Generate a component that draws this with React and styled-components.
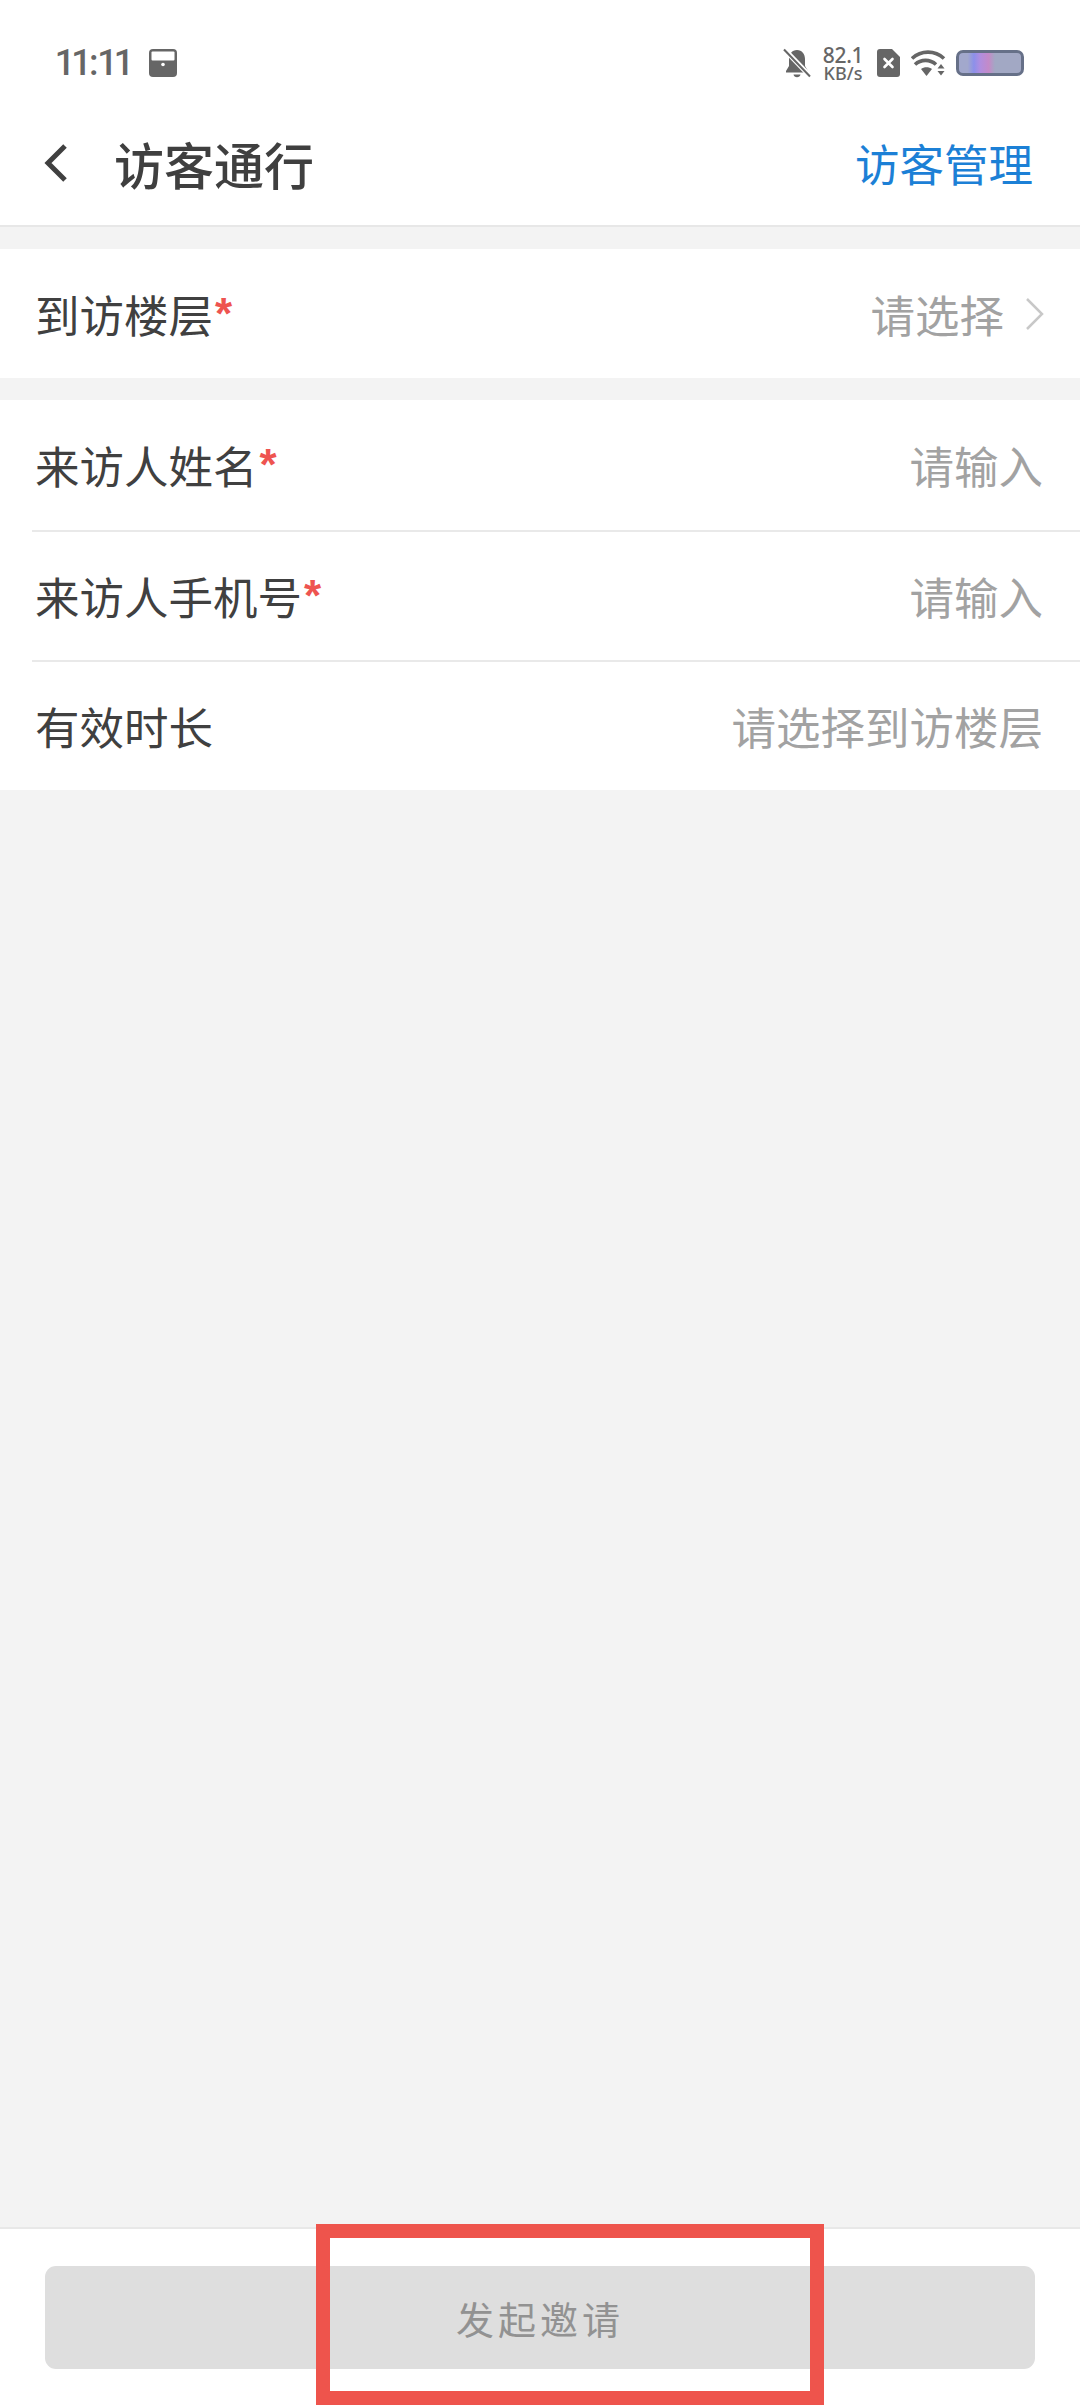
import React from "react";
import styled, { createGlobalStyle } from "styled-components";

const Global = createGlobalStyle`
  html, body { margin: 0; padding: 0; background: #f3f3f3; }
  * { box-sizing: border-box; }
  body { font-family: "Noto Sans CJK SC", "Noto Sans", sans-serif; }
`;

const Page = styled.div`
  position: relative;
  width: 1080px;
  height: 2408px;
  display: flex;
  flex-direction: column;
  background: #f3f3f3;
  overflow: hidden;
`;

const Top = styled.header`
  height: 227px;
  background: #fff;
  border-bottom: 2px solid #e7e7e7;
  flex: none;
`;

const StatusBar = styled.div`
  height: 105px;
  padding: 21px 56px 0 56px;
  display: flex;
  align-items: center;
  justify-content: space-between;
  color: #666;
`;

const StatusGroup = styled.div`
  display: flex;
  align-items: center;
`;

const Clock = styled.span`
  font: 500 36px/1 Roboto, sans-serif;
  font-variant-numeric: proportional-nums;
  letter-spacing: 0;
  margin-right: 17px;
`;

const Speed = styled.div`
  width: 42px;
  margin: 0 13px 0 11px;
  display: flex;
  flex-direction: column;
  align-items: center;
  gap: 2px;
  font-family: "Noto Sans", sans-serif;
  font-weight: 500;
  color: #666;
`;

const SpeedValue = styled.span`
  font-size: 21px;
  line-height: 18px;
  letter-spacing: -0.3px;
`;

const SpeedUnit = styled.span`
  font-size: 18px;
  line-height: 15px;
`;

const SimGap = styled.span`
  width: 11px;
`;

const Battery = styled.div`
  width: 68px;
  height: 26px;
  margin-left: 10px;
  border: 3px solid #667088;
  border-radius: 7px;
  background: linear-gradient(90deg, #a2a8cc 0 14%, #8c90ea 24%, #b08ee0 34%, #c48ac8 48%, #a2a8c4 58%, #a2a8c4 100%);
`;

const NavBar = styled.div`
  height: 116px;
  padding: 0 47px 0 44px;
  display: flex;
  align-items: center;
`;

const Back = styled.svg`
  width: 24px;
  height: 44px;
  margin-right: 46px;
  flex: none;
`;

const Title = styled.h1`
  margin: 0;
  flex: 1;
  font-size: 50px;
  line-height: 60px;
  font-weight: 500;
  color: #3f3f3f;
`;

const NavAction = styled.span`
  font-size: 44.5px;
  line-height: 60px;
  color: #1c80d6;
`;

const Group = styled.section`
  background: #fff;
  margin-top: 22px;
`;

const Row = styled.div`
  height: ${(p) => p.$h || 130}px;
  margin-left: 32px;
  padding: 0 37px 0 3px;
  display: flex;
  align-items: center;
  justify-content: space-between;
  & + & { border-top: 2px solid #e9e9e9; }
`;

const Label = styled.span`
  font-size: 44.5px;
  line-height: 60px;
  color: #404040;
`;

const Star = styled.span`
  font: 700 44px/44px "Liberation Sans", sans-serif;
  color: #ee5450;
  margin-left: 2px;
  display: inline-block;
  transform: translateY(-4px);
`;

const Value = styled.span`
  display: flex;
  align-items: center;
  font-size: 44.5px;
  line-height: 60px;
  color: #a2a2a2;
`;

const Chevron = styled.svg`
  width: 20px;
  height: 34px;
  margin-left: 21px;
  margin-right: -2px;
`;

const Spacer = styled.div`
  flex: 1;
`;

const Footer = styled.footer`
  height: 181px;
  flex: none;
  background: #fff;
  border-top: 2px solid #e8e8e8;
  padding: 37px 45px 0;
`;

const Submit = styled.div`
  height: 103px;
  border-radius: 11px;
  background: #dedede;
  display: flex;
  align-items: center;
  justify-content: center;
  font-size: 38px;
  letter-spacing: 4px;
  color: #929292;
`;

const Highlight = styled.div`
  position: absolute;
  left: 316px;
  top: 2224px;
  width: 508px;
  height: 181px;
  border: 14px solid #ee544c;
  pointer-events: none;
`;

const BagIcon = () => (
  <svg width="28" height="28" viewBox="0 0 28 28">
    <rect width="28" height="28" rx="4" fill="#666" />
    <rect x="2.5" y="2.5" width="23" height="9" rx="1" fill="#fff" />
    <circle cx="14" cy="15.5" r="1.8" fill="#fff" />
  </svg>
);

const BellIcon = () => (
  <svg width="28" height="30" viewBox="0 0 28 30">
    <path d="M14 2c-5 0-8 4-8 9v7l-3 5v1.500h22V23l-3-5v-7c0-5-3-9-8-9z" fill="#666" />
    <path d="M10.500 26.500a3.600 3.600 0 0 0 7 0z" fill="#666" />
    <path d="M1 1l26 27" stroke="#fff" strokeWidth="5" />
    <path d="M1 1.500l26 27" stroke="#666" strokeWidth="2" />
  </svg>
);

const SimIcon = () => (
  <svg width="23" height="28" viewBox="0 0 23 28">
    <path d="M3 0h12l8 8v17a3 3 0 0 1-3 3H3a3 3 0 0 1-3-3V3a3 3 0 0 1 3-3z" fill="#666" />
    <path d="M7.500 10l8 8M15.500 10l-8 8" stroke="#fff" strokeWidth="2.600" strokeLinecap="round" />
  </svg>
);

const WifiIcon = () => (
  <svg width="35" height="28" viewBox="0 0 35 28">
    <path d="M1 9.500C10 1 24 1 33 9.500" fill="none" stroke="#666" strokeWidth="3.600" />
    <path d="M4 15.500c6-5.500 15-5.500 21 0" fill="none" stroke="#666" strokeWidth="3.600" />
    <path d="M10 20c3-2.500 8-2.500 11 0l-5.500 7z" fill="#666" />
    <path d="M30 15l-3.500 4.500h7zM26.500 22h7L30 26.500z" fill="#666" />
  </svg>
);

export default function App() {
  return (
    <Page>
      <Global />
      <Top>
        <StatusBar>
          <StatusGroup>
            <Clock>11:11</Clock>
            <BagIcon />
          </StatusGroup>
          <StatusGroup>
            <BellIcon />
            <Speed>
              <SpeedValue>82.1</SpeedValue>
              <SpeedUnit>KB/s</SpeedUnit>
            </Speed>
            <SimIcon />
            <SimGap />
            <WifiIcon />
            <Battery />
          </StatusGroup>
        </StatusBar>
        <NavBar>
          <Back viewBox="0 0 24 44">
            <path d="M21 5L4 22l17 17" fill="none" stroke="#404040" strokeWidth="5" />
          </Back>
          <Title>访客通行</Title>
          <NavAction>访客管理</NavAction>
        </NavBar>
      </Top>

      <Group>
        <Row $h={129}>
          <Label>到访楼层<Star>*</Star></Label>
          <Value>
            请选择
            <Chevron viewBox="0 0 20 34">
              <path d="M2 2l15 15L2 32" fill="none" stroke="#c8c8c8" strokeWidth="2.500" />
            </Chevron>
          </Value>
        </Row>
      </Group>

      <Group>
        <Row>
          <Label>来访人姓名<Star>*</Star></Label>
          <Value>请输入</Value>
        </Row>
        <Row>
          <Label>来访人手机号<Star>*</Star></Label>
          <Value>请输入</Value>
        </Row>
        <Row>
          <Label>有效时长</Label>
          <Value>请选择到访楼层</Value>
        </Row>
      </Group>

      <Spacer />

      <Footer>
        <Submit>发起邀请</Submit>
      </Footer>
      <Highlight />
    </Page>
  );
}
